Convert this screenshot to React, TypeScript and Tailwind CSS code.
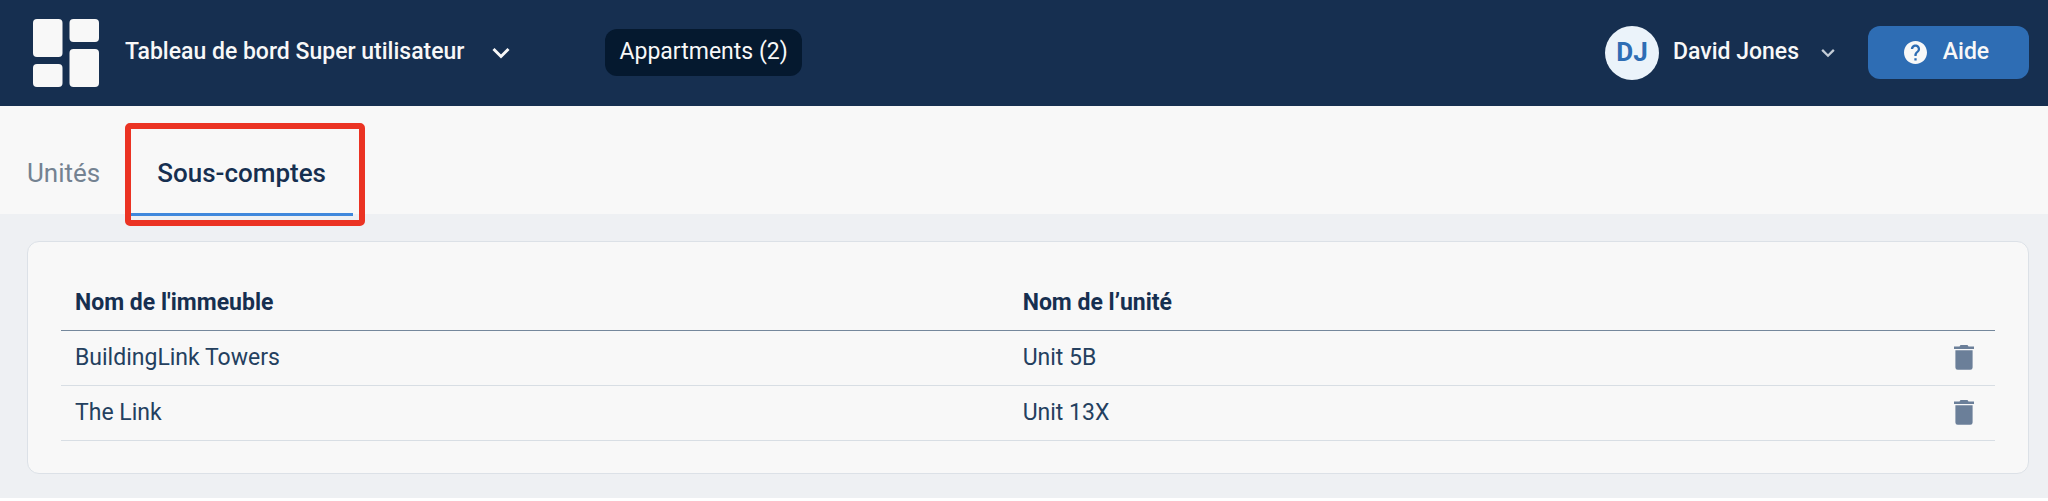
import { useState } from 'react';

interface SubAccount {
  building: string;
  unit: string;
}

const SUB_ACCOUNTS: SubAccount[] = [
  { building: 'BuildingLink Towers', unit: 'Unit 5B' },
  { building: 'The Link', unit: 'Unit 13X' },
];

const TABS = ['Unités', 'Sous-comptes'];

function DashboardLogo() {
  return (
    <svg viewBox="0 0 66 68" className="h-[68px] w-[66px] fill-[#f8f8f8]" aria-hidden="true">
      <rect x="0" y="0" width="29.5" height="38" rx="4" />
      <rect x="0" y="45" width="29.5" height="23" rx="4" />
      <rect x="36.5" y="0" width="29.5" height="23" rx="4" />
      <rect x="36.5" y="30" width="29.5" height="38" rx="4" />
    </svg>
  );
}

function ChevronIcon({ className }: { className: string }) {
  return (
    <svg viewBox="0 0 18 12" className={className} fill="none" stroke="currentColor" aria-hidden="true">
      <path d="M1.5 2 9 9.5 16.5 2" />
    </svg>
  );
}

function HelpIcon() {
  return (
    <svg viewBox="2 2 20 20" className="size-[23px] fill-current" aria-hidden="true">
      <path d="M12 2C6.48 2 2 6.48 2 12s4.48 10 10 10 10-4.48 10-10S17.52 2 12 2zm1 17h-2v-2h2v2zm2.07-7.75-.9.92C13.45 12.9 13 13.5 13 15h-2v-.5c0-1.1.45-2.1 1.17-2.83l1.24-1.26c.37-.36.59-.86.59-1.41 0-1.1-.9-2-2-2s-2 .9-2 2H8c0-2.21 1.79-4 4-4s4 1.79 4 4c0 .88-.36 1.68-.93 2.25z" />
    </svg>
  );
}

function TrashIcon() {
  return (
    <svg viewBox="0 0 20 25" className="h-[25px] w-5 fill-[#6b7f99]" aria-hidden="true">
      <path d="M0 1.4h5.5L6.5 0h7l1 1.4H20V4H0zM1.4 5.2h17.2v17.3a2.3 2.3 0 0 1-2.3 2.3H3.7a2.3 2.3 0 0 1-2.3-2.3z" />
    </svg>
  );
}

function Header() {
  return (
    <header className="flex h-[106px] items-center bg-[#162f50] pr-[19px] pb-px pl-[33px] text-[23px] text-[#f8f8f8]">
      <DashboardLogo />
      <button type="button" className="ml-[26px] flex items-center gap-7 font-medium">
        Tableau de bord Super utilisateur
        <ChevronIcon className="h-3 w-[18px] stroke-3" />
      </button>
      <span className="ml-[95px] flex h-[47px] items-center rounded-xl bg-[#05192f] px-[14px]">
        Appartments (2)
      </span>
      <button type="button" className="ml-auto flex items-center font-medium">
        <span className="flex size-[54px] items-center justify-center rounded-full bg-[#ebf3fa] text-[26px] font-bold text-[#2e6db4]">
          DJ
        </span>
        <span className="ml-[14px]">David Jones</span>
        <ChevronIcon className="ml-[22px] h-[10px] w-[14px] stroke-3 text-[#c3ccd6]" />
      </button>
      <button
        type="button"
        className="ml-[33px] flex h-[53px] w-[161px] items-center justify-center gap-4 rounded-xl bg-[#2e6db4] pr-1 font-medium"
      >
        <HelpIcon />
        Aide
      </button>
    </header>
  );
}

interface TabBarProps {
  activeTab: string;
  onTabChange: (tab: string) => void;
}

function TabBar({ activeTab, onTabChange }: TabBarProps) {
  return (
    <nav className="flex h-[108px] gap-[3px] bg-[#f8f8f8]">
      {TABS.map((tab) => {
        const active = tab === activeTab;
        return (
          <div key={tab} className="relative flex">
            <button
              type="button"
              onClick={() => onTabChange(tab)}
              className={
                active
                  ? 'px-[27px] pt-[42px] pb-4 text-[26px] font-medium text-[#162f50]'
                  : 'px-[27px] pt-[42px] pb-4 text-[26px] text-[#748291]'
              }
            >
              {tab}
            </button>
            {active && (
              <>
                <span className="absolute inset-x-0 -bottom-[2px] h-[3px] bg-[#3f87dc]" />
                <span className="pointer-events-none absolute top-[17px] -right-3 -bottom-3 -left-[5px] rounded-[5px] border-[6px] border-[#eb3323]" />
              </>
            )}
          </div>
        );
      })}
    </nav>
  );
}

function SubAccountsTable() {
  return (
    <table className="w-full table-fixed border-collapse text-left text-[23px] text-[#24405f]">
      <thead>
        <tr className="h-[55px] border-b border-[#75889c] text-[#162f50]">
          <th className="w-[49%] px-[14px] pt-[2px] font-bold">Nom de l'immeuble</th>
          <th className="px-[14px] pt-[2px] font-bold">Nom de l’unité</th>
          <th className="w-[60px]" aria-label="Actions" />
        </tr>
      </thead>
      <tbody>
        {SUB_ACCOUNTS.map(({ building, unit }) => (
          <tr key={building} className="h-[55px] border-b border-[#d8dee4]">
            <td className="px-[14px] pt-[2px]">{building}</td>
            <td className="px-[14px] pt-[2px]">{unit}</td>
            <td className="pr-[21px]">
              <button type="button" className="ml-auto block" aria-label="Supprimer">
                <TrashIcon />
              </button>
            </td>
          </tr>
        ))}
      </tbody>
    </table>
  );
}

export default function App() {
  const [activeTab, setActiveTab] = useState('Sous-comptes');

  return (
    <div className="bg-[#eef0f3] font-[Roboto,sans-serif]">
      <Header />
      <TabBar activeTab={activeTab} onTabChange={setActiveTab} />
      <main className="pt-[27px] pr-[19px] pb-6 pl-[27px]">
        <section className="rounded-xl border border-[#dce1e7] bg-[#f8f8f8] px-[33px] pt-[33px] pb-8">
          <SubAccountsTable />
        </section>
      </main>
    </div>
  );
}
